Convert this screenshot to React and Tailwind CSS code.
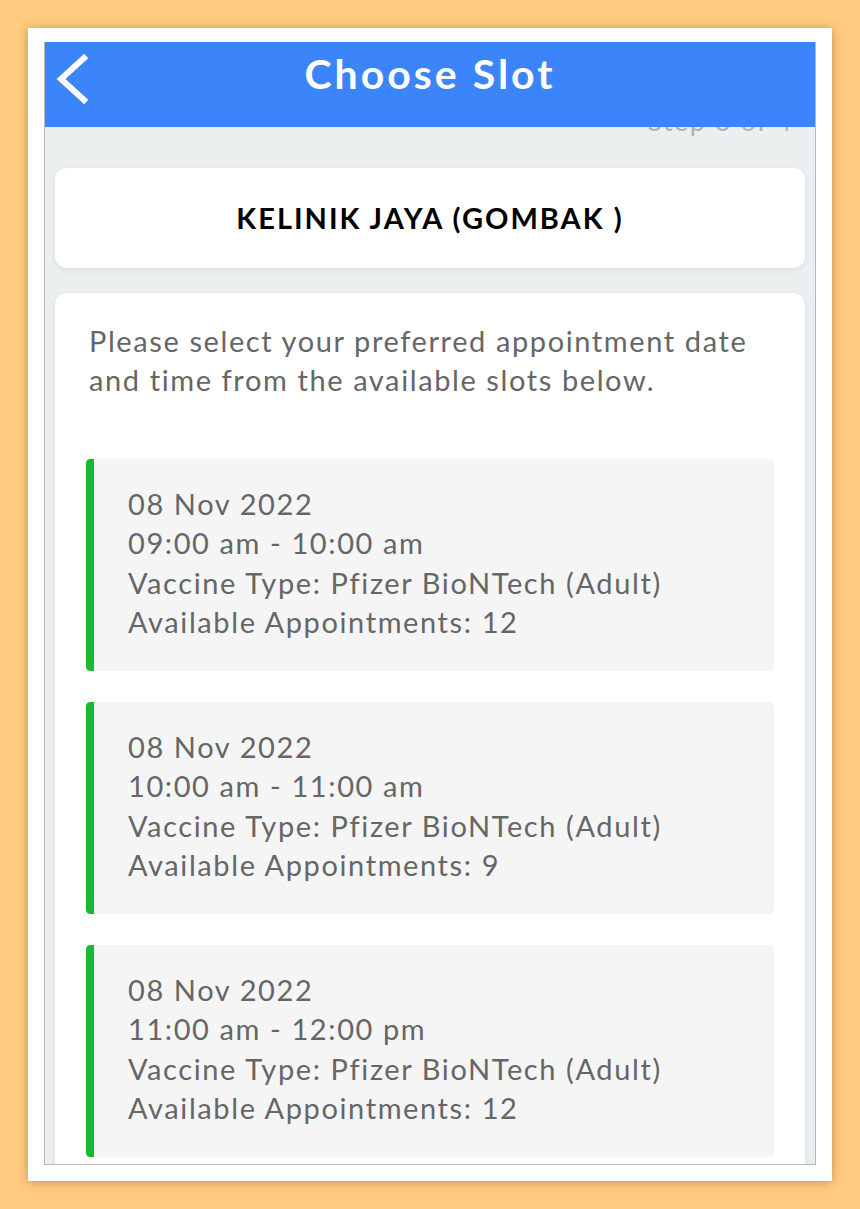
const slots = [
  { date: '08 Nov 2022', time: '09:00 am - 10:00 am', vaccine: 'Pfizer BioNTech (Adult)', available: 12 },
  { date: '08 Nov 2022', time: '10:00 am - 11:00 am', vaccine: 'Pfizer BioNTech (Adult)', available: 9 },
  { date: '08 Nov 2022', time: '11:00 am - 12:00 pm', vaccine: 'Pfizer BioNTech (Adult)', available: 12 },
]

function BackIcon() {
  return (
    <svg width="34" height="52" viewBox="0 0 34 52" fill="none">
      <path d="M29 5 L6 26 L29 47" stroke="white" strokeWidth="6" strokeLinecap="square" />
    </svg>
  )
}

function SlotCard({ slot }) {
  return (
    <div className="flex h-[212px] overflow-hidden rounded-[4px] bg-[#f5f5f5]">
      <div className="w-[8px] shrink-0 rounded-l-[4px] bg-[#17b92e]" />
      <div className="pl-[34px] pt-[25px] text-[29px] leading-[39.5px] tracking-[1.6px] text-[#666666]">
        <p>{slot.date}</p>
        <p>{slot.time}</p>
        <p>Vaccine Type: {slot.vaccine}</p>
        <p>Available Appointments: {slot.available}</p>
      </div>
    </div>
  )
}

export default function App() {
  return (
    <div className="min-h-screen bg-[#fecb80] px-[28px] pt-[28px] font-['Lato','Liberation_Sans',sans-serif]">
      <div className="h-[1153px] w-[804px] bg-white pb-[16px] pl-[16px] pr-[16px] pt-[14px] shadow-[0_1px_10px_rgba(120,80,20,0.45)]">
        <div className="h-[1123px] overflow-hidden border-x border-b border-[#b5b8ba] bg-[#eceff0]">
          <header className="relative z-10 flex h-[85px] items-start bg-[#3b84fa] pl-[10px] pt-[11px]">
            <BackIcon />
            <h1 className="absolute inset-x-0 top-[1px] text-center text-[41px] font-bold tracking-[3px] text-white">
              Choose Slot
            </h1>
          </header>
          <p className="-mt-[26px] pr-[22px] text-right text-[27px] tracking-[1.5px] text-[#b0b2b4]">Step 3 of 4</p>

          <div className="px-[10px] pt-[26px]">
            <div className="flex h-[100px] items-center justify-center rounded-[12px] bg-white shadow-[0_2px_6px_rgba(0,0,0,0.07)]">
              <h2 className="text-[29px] font-bold tracking-[2px] text-black">KELINIK JAYA (GOMBAK )</h2>
            </div>

            <div className="mt-[25px] rounded-[12px] bg-white px-[31px] pb-[20px] pt-[28px] shadow-[0_2px_6px_rgba(0,0,0,0.07)]">
              <p className="pl-[3px] text-[29px] leading-[39px] tracking-[1.6px] text-[#666666]">
                Please select your preferred appointment date and time from the available slots below.
              </p>
              <div className="mt-[60px] flex flex-col gap-[31px]">
                {slots.map((slot, index) => (
                  <SlotCard key={index} slot={slot} />
                ))}
              </div>
            </div>
          </div>
        </div>
      </div>
    </div>
  )
}
